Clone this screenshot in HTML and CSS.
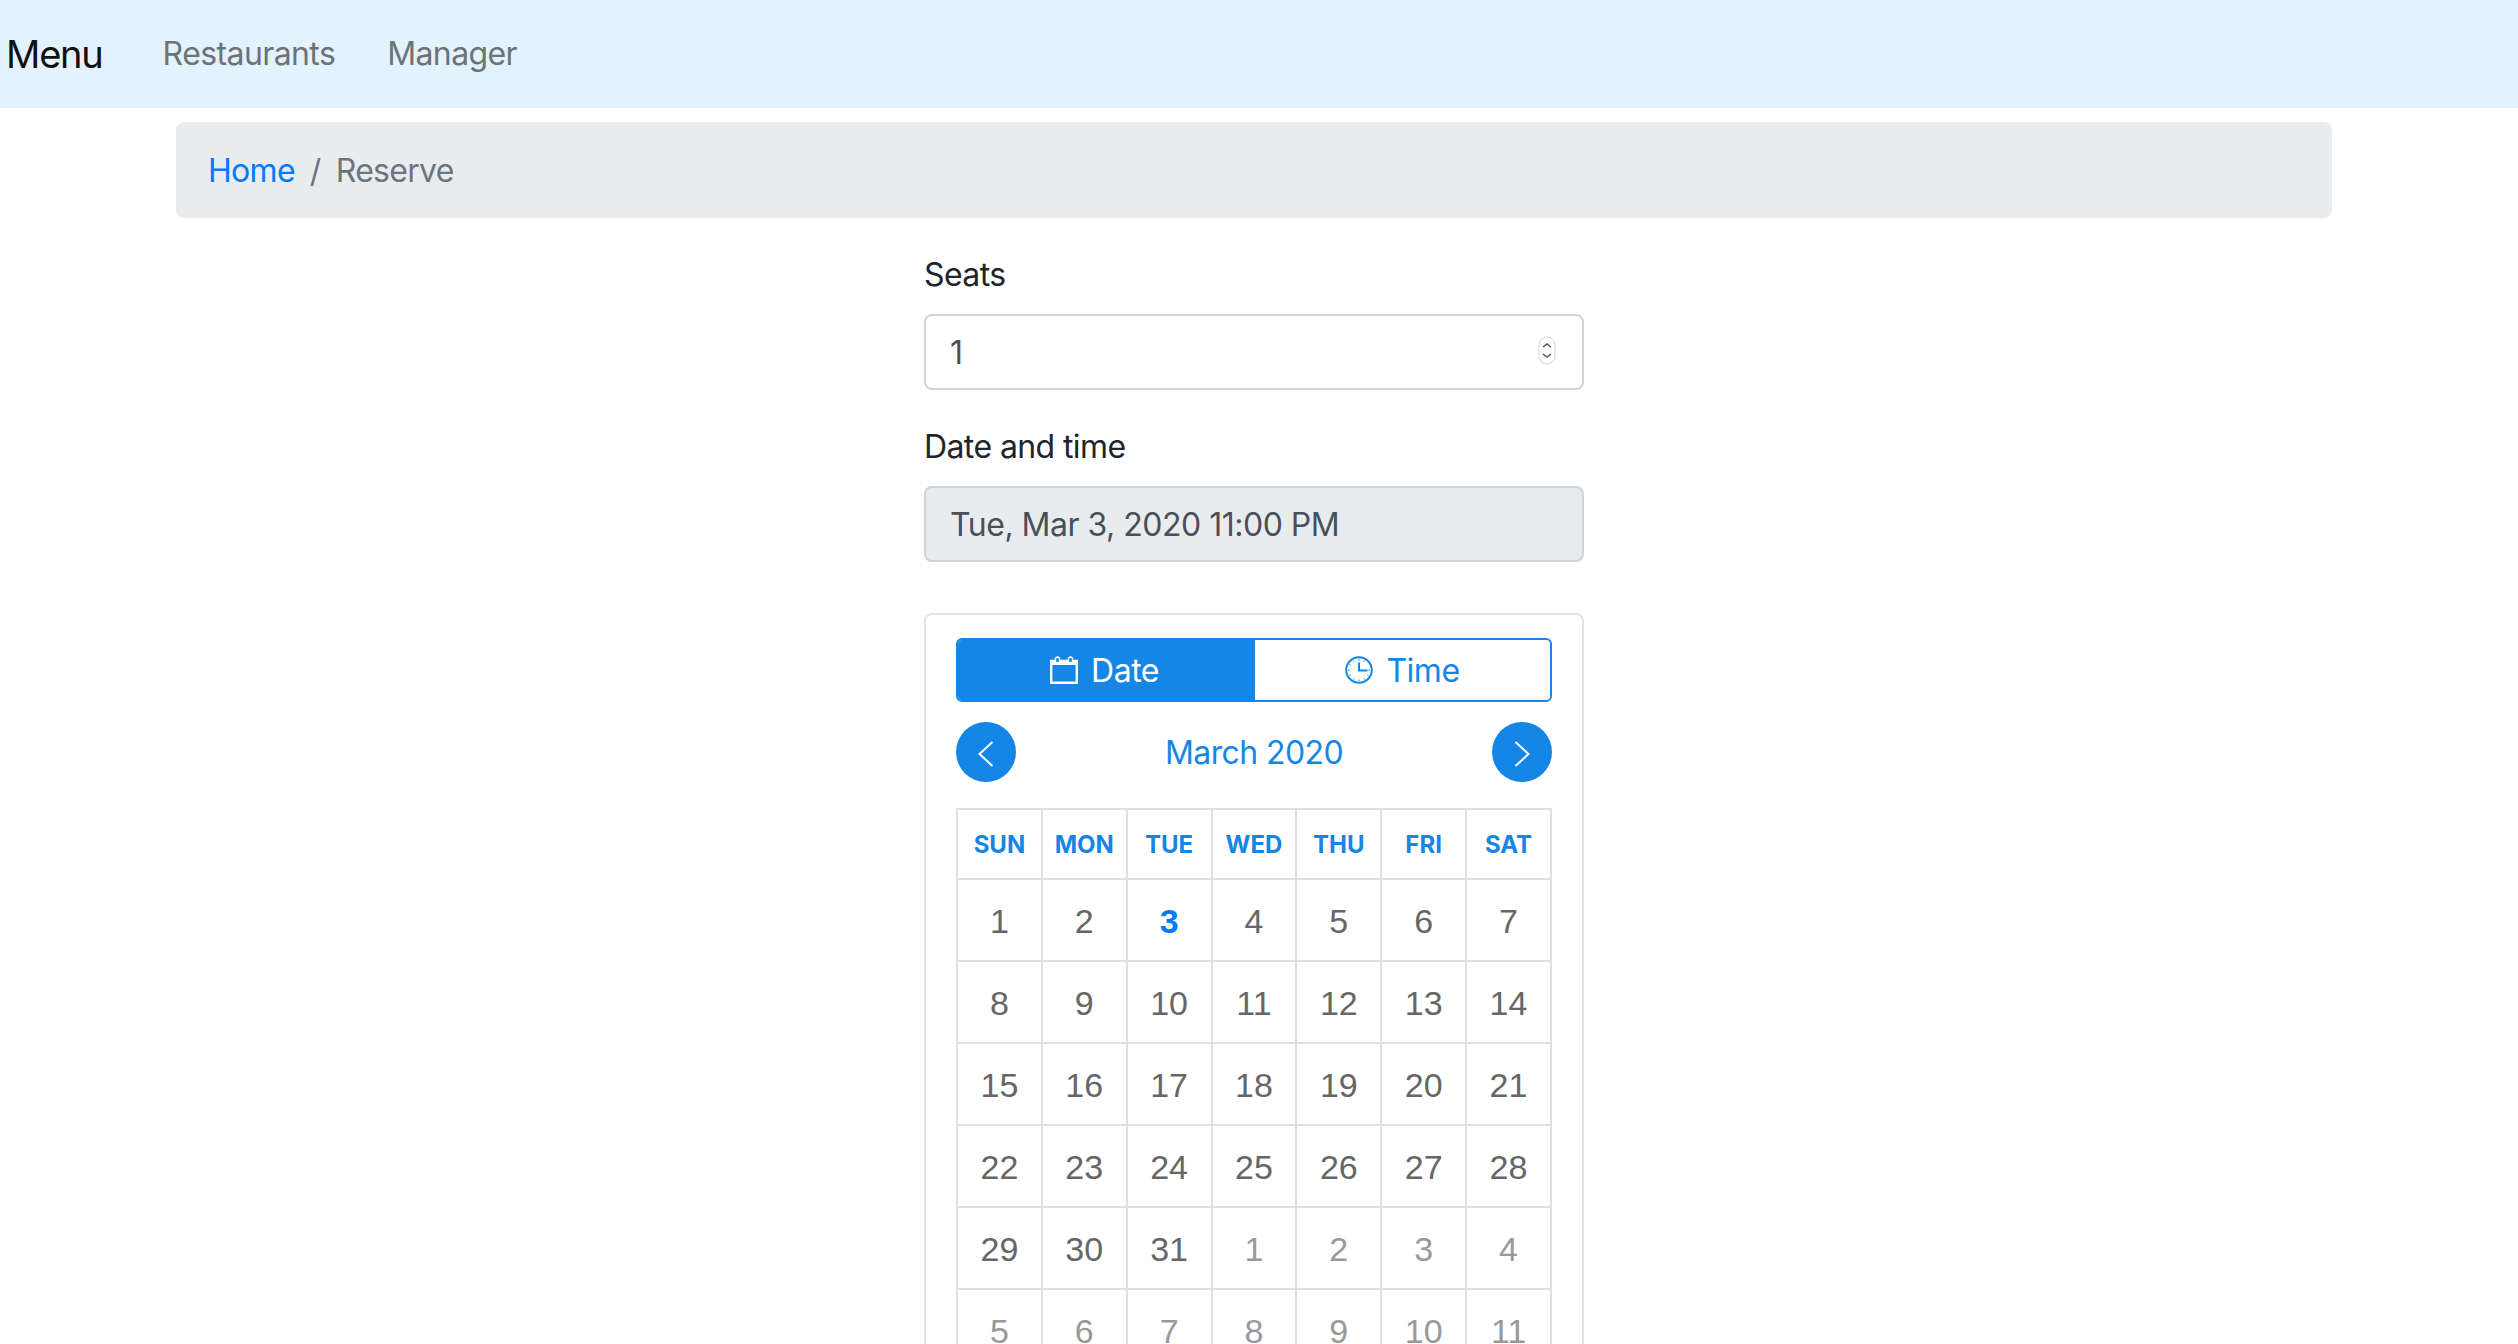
FILE: index.html
```html
<!DOCTYPE html>
<html lang="en">
<head>
    <meta charset="UTF-8">
    <meta name="viewport" content="width=device-width, initial-scale=1.0">
    <title>Reserve</title>
    <link rel="stylesheet" href="styles.css">
</head>
<body>
    <nav class="navbar">
        <a class="brand" href="#">Menu</a>
        <a class="nav-link" href="#">Restaurants</a>
        <a class="nav-link" href="#">Manager</a>
    </nav>

    <div class="container">
        <div class="breadcrumb">
            <a href="#">Home</a>
            <span class="sep">/</span>
            <span class="current">Reserve</span>
        </div>

        <form class="reserve-form">
            <label class="form-label">Seats</label>
            <div class="form-control">
                <span>1</span>
                <svg class="spinner" width="18" height="29" viewBox="0 0 18 29">
                    <rect x="1" y="1" width="16" height="27" rx="8" fill="#fff" stroke="#d4d4d4"/>
                    <path d="M5 11l4-3 4 3M5 18l4 3 4-3" fill="none" stroke="#555" stroke-width="1.5"/>
                </svg>
            </div>

            <label class="form-label">Date and time</label>
            <div class="form-control readonly"><span>Tue, Mar 3, 2020 11:00 PM</span></div>

            <div class="picker">
                <div class="toggle">
                    <div class="toggle-btn active">
                        <svg width="28" height="28" viewBox="0 0 28 28">
                            <path d="M1.200 5h25.600v21.800H1.200z" fill="none" stroke="currentColor" stroke-width="2.400"/>
                            <path d="M0 4h28v5H0z" fill="currentColor"/>
                            <rect x="5.500" y="1" width="4" height="6" rx="2" fill="#1585e6" stroke="#fff" stroke-width="1.400"/>
                            <rect x="18.500" y="1" width="4" height="6" rx="2" fill="#1585e6" stroke="#fff" stroke-width="1.400"/>
                        </svg>
                        <span>Date</span>
                    </div>
                    <div class="toggle-btn">
                        <svg width="28" height="28" viewBox="0 0 28 28">
                            <circle cx="14" cy="14" r="12.800" fill="none" stroke="currentColor" stroke-width="2"/>
                            <path d="M14 6.500v8h8.500" fill="none" stroke="currentColor" stroke-width="2"/>
                            <path d="M14 3v1.500M14 23.500v1.500M3 14h1.500M23.500 14h1.500M8.500 4.500l.7 1.200M19.500 4.500l-.7 1.200M4.500 8.500l1.200.7M4.500 19.500l1.200-.7M23.500 19.500l-1.200-.7M8.500 23.500l.7-1.200M19.500 23.500l-.7-1.200" stroke="currentColor" stroke-width="1"/>
                        </svg>
                        <span>Time</span>
                    </div>
                </div>

                <div class="month-nav">
                    <button type="button" class="round-btn">
                        <svg width="20" height="26" viewBox="0 0 20 26"><path d="M16.500 1L3.500 13l13 12" fill="none" stroke="#fff" stroke-width="2"/></svg>
                    </button>
                    <span class="month-title">March 2020</span>
                    <button type="button" class="round-btn">
                        <svg width="20" height="26" viewBox="0 0 20 26"><path d="M3.500 1l13 12-13 12" fill="none" stroke="#fff" stroke-width="2"/></svg>
                    </button>
                </div>

                <table class="calendar">
                    <thead>
                        <tr><th>SUN</th><th>MON</th><th>TUE</th><th>WED</th><th>THU</th><th>FRI</th><th>SAT</th></tr>
                    </thead>
                    <tbody>
                        <tr><td>1</td><td>2</td><td class="today">3</td><td>4</td><td>5</td><td>6</td><td>7</td></tr>
                        <tr><td>8</td><td>9</td><td>10</td><td>11</td><td>12</td><td>13</td><td>14</td></tr>
                        <tr><td>15</td><td>16</td><td>17</td><td>18</td><td>19</td><td>20</td><td>21</td></tr>
                        <tr><td>22</td><td>23</td><td>24</td><td>25</td><td>26</td><td>27</td><td>28</td></tr>
                        <tr><td>29</td><td>30</td><td>31</td><td class="muted">1</td><td class="muted">2</td><td class="muted">3</td><td class="muted">4</td></tr>
                        <tr><td class="muted">5</td><td class="muted">6</td><td class="muted">7</td><td class="muted">8</td><td class="muted">9</td><td class="muted">10</td><td class="muted">11</td></tr>
                    </tbody>
                </table>
            </div>
        </form>
    </div>
</body>
</html>
```

FILE: styles.css
```css
html, body {
    height: 1344px;
    overflow: hidden;
}
body {
    margin: 0;
    font-family: Inter, "Noto Sans", sans-serif;
    font-size: 32px;
    line-height: 48px;
    color: #212529;
    background: #fff;
}
a {
    text-decoration: none;
}

.navbar {
    display: flex;
    align-items: center;
    height: 108px;
    padding-left: 6px;
    background-color: #e3f2fd;
}
.brand {
    font-size: 38px;
    color: #111;
    margin-right: 60px;
    letter-spacing: -1.2px;
}
.nav-link {
    color: #6c7278;
    margin-right: 52px;
    letter-spacing: -0.6px;
}

.container {
    padding: 14px 186px 0 176px;
}
.breadcrumb {
    display: flex;
    gap: 15px;
    height: 96px;
    box-sizing: border-box;
    align-items: center;
    padding: 2px 32px 0;
    background-color: #e9ecef;
    border-radius: 8px;
    letter-spacing: -0.7px;
}
.breadcrumb a {
    color: #007bff;
}
.sep, .current {
    color: #6c757d;
}

.reserve-form {
    width: 660px;
    margin: 33px auto 0;
}
.form-label {
    display: block;
    margin-bottom: 15px;
    letter-spacing: -0.6px;
}
.form-control {
    display: flex;
    align-items: center;
    justify-content: space-between;
    box-sizing: border-box;
    height: 76px;
    margin-bottom: 33px;
    padding: 2px 24px 0;
    color: #495057;
    border: 2px solid #ced4da;
    border-radius: 8px;
    letter-spacing: -0.5px;
}
.form-control.readonly {
    background-color: #e9ecef;
}
.spinner {
    margin: 0 2px 5px 0;
}

.picker {
    box-sizing: border-box;
    height: 900px;
    margin-top: 51px;
    padding: 23px 30px 0;
    border: 2px solid #e2e3e6;
    border-radius: 8px;
}
.toggle {
    display: flex;
    box-sizing: border-box;
    height: 64px;
    color: #1585e6;
    border: 2px solid #1585e6;
    border-radius: 6px;
    overflow: hidden;
}
.toggle-btn {
    flex: 1;
    display: flex;
    align-items: center;
    justify-content: center;
    gap: 13px;
    letter-spacing: -0.5px;
}
.toggle-btn span {
    padding-top: 2px;
}
.toggle-btn.active {
    flex: 0 0 297px;
    box-sizing: border-box;
    padding-right: 4px;
    background-color: #1585e6;
    color: #fff;
}

.month-nav {
    display: flex;
    align-items: center;
    justify-content: space-between;
    margin: 20px 0 26px;
}
.round-btn {
    display: flex;
    align-items: center;
    justify-content: center;
    width: 60px;
    height: 60px;
    padding: 4px 0 0;
    border: none;
    border-radius: 50%;
    background-color: #1585e6;
}
.month-title {
    padding-top: 2px;
    color: #1585e6;
    letter-spacing: -0.6px;
}

.calendar {
    width: 100%;
    table-layout: fixed;
    border-collapse: collapse;
}
.calendar th, .calendar td {
    padding: 0;
    text-align: center;
    border: 2px solid #dfe0e3;
}
.calendar th {
    height: 66px;
    padding-top: 2px;
    box-sizing: content-box;
    font-size: 24px;
    font-weight: 700;
    color: #1585e6;
}
.calendar td {
    height: 82px;
    padding-top: 2px;
    box-sizing: border-box;
    font-family: "Liberation Sans", Arial, sans-serif;
    font-size: 34px;
    color: #666;
}
.calendar td.today {
    color: #007bff;
    font-weight: 700;
}
.calendar td.muted {
    color: #999;
}
```
